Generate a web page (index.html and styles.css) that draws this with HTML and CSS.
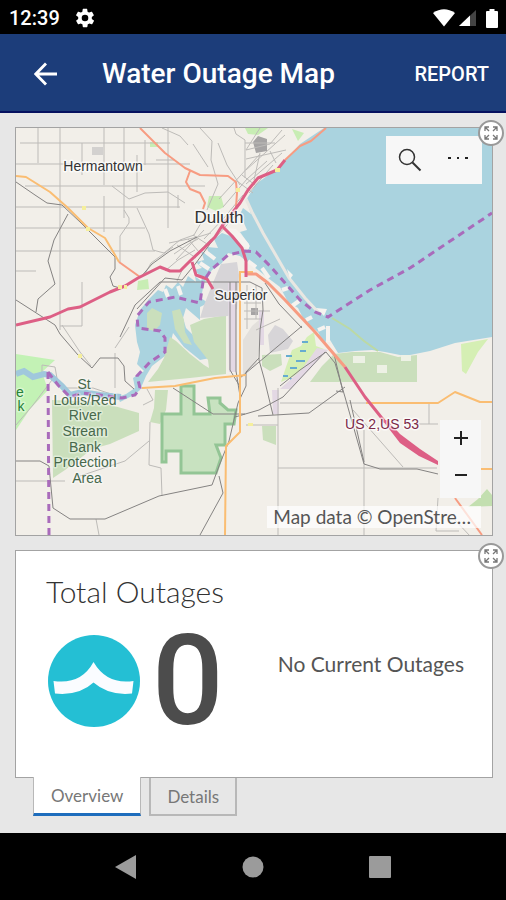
FILE: index.html
```html
<!DOCTYPE html>
<html lang="en">
<head>
<meta charset="utf-8">
<meta name="viewport" content="width=device-width, initial-scale=1">
<title>Water Outage Map</title>
<link rel="stylesheet" href="styles.css">
</head>
<body>
<div class="status">
  <time>12:39</time>
  <svg class="gear" viewBox="0 0 24 24" width="22" height="22" aria-hidden="true"><path fill="#fff" d="M19.4 13a7.500 7.500 0 0 0 0-2l2.100-1.600a.5.5 0 0 0 .1-.6l-2-3.500a.5.5 0 0 0-.6-.2l-2.500 1a7.300 7.300 0 0 0-1.700-1l-.4-2.600A.5.5 0 0 0 14 2h-4a.5.5 0 0 0-.5.400l-.4 2.700a7.700 7.700 0 0 0-1.700 1l-2.500-1a.5.5 0 0 0-.6.200l-2 3.500a.5.5 0 0 0 .1.600L4.600 11a8 8 0 0 0 0 2l-2.100 1.600a.5.5 0 0 0-.1.600l2 3.500c.1.200.4.300.6.200l2.500-1a7.300 7.300 0 0 0 1.700 1l.4 2.700c0 .2.200.400.5.400h4c.2 0 .4-.2.500-.4l.4-2.700a7.700 7.700 0 0 0 1.700-1l2.500 1c.2.100.5 0 .6-.2l2-3.500a.5.5 0 0 0-.1-.6zM12 15.600a3.600 3.600 0 1 1 0-7.200 3.600 3.600 0 0 1 0 7.200z"/></svg>
  <span class="signals">
    <svg viewBox="0 0 22 18" width="22" height="18" aria-hidden="true"><path fill="#fff" d="M0 4Q11-3.500 22 4L11 17.500z"/></svg>
    <svg viewBox="0 0 17 18" width="17" height="18" aria-hidden="true"><path fill="#444" d="M17 1v16H0z"/><path fill="#fff" d="M11 6.600V17H0z"/></svg>
    <svg class="battery" viewBox="0 0 12 19" width="12" height="19" aria-hidden="true"><path fill="#fff" d="M3.500 0h5v2H11q1 0 1 1v15q0 1-1 1H1q-1 0-1-1V3q0-1 1-1h2.500z"/></svg>
  </span>
</div>
<header class="appbar">
  <button class="back" aria-label="Back"><svg viewBox="0 0 24 24" width="24" height="24"><path d="M23 12H2M12 1.500 1.800 12 12 22.500" fill="none" stroke="#fff" stroke-width="2.800"/></svg></button>
  <h1>Water Outage Map</h1>
  <button class="report">REPORT</button>
</header>
<main>
  <section class="panel map" aria-label="Map">
    <svg class="canvas" viewBox="16 128 476 407" preserveAspectRatio="xMidYMid slice">
      <rect x="0" y="100" width="520" height="460" fill="#f2efe9"/>
      <!-- open water and the bays -->
      <path class="water" d="M324 128H492V337L455 343 430 351 405 356 385 352 372 350 355 351 338 353 327 335 325 345 318 332 305 322 298 308 288 302 280 287 268 278 258 270 250 264 240 256 228 253 222 263 212 270 204 283 201 298 208 303 200 307 200 320 186 308 183 318 186 328 198 340 210 358 200 360 184 347 173 333 170 345 165 356 152 366 146 376 140 390 134 395 120 402 118 397 126 394 135 388 133 378 144 371 137 364 140 352 137 342 135 325 140 310 149 299 158 290 163 292 166 285 172 289 178 282 183 287 188 276 196 282 194 270 202 268 196 262 204 260 201 251 209 256 207 247 218 248 214 239 222 233 236 238 246 252 250 246 240 232 247 230 240 214 243 208 251 214 246 200 256 184 278 168 300 144z"/>
      <!-- parks and woodland -->
      <path class="wood" d="M52 400 100 402 139 413 139 431 110 444 92 449 65 470 53 478z"/>
      <path class="wood" d="M147 313 152 308 162 313 160 325 154 331 147 329zM172 311 180 309 184 320 185 332 192 345 184 343 175 329zM164 358 170 337 176 341 190 354 204 365 209 368 208 360 194 342 190 325 204 319 226 315 226 374 190 378 148 382 158 369z"/>
      <path class="wood" d="M334 354 352 352 380 352 398 357 417 355 417 382H310L322 366z"/>
      <path class="wood" d="M155 390 168 390 166 410 160 424 150 422 154 408zM262 355 281 354 282 365 270 371 262 366zM262 426H276V445L263 440z"/>
      <path fill="#c3f2b5" d="M16 354 55 360 42 372 48 390 30 409 16 430z"/>
      <path fill="#c8edb4" d="M209 196H221L224 207 216 211 207 207zM245 128H268L258 135 248 134zM292 129 304 133 298 141zM138 281 148 279 149 289 137 290zM150 142H158V147H150z"/>
      <path fill="#d5efb4" d="M461 344 488 339 478 352 466 374 462 371zM307 337 314 332 316 346 324 349 310 360 297 375 281 382 286 367 292 350 301 346z"/>
      <path fill="#c3dfb0" d="M478 499 487 489 492 495V506L468 507z"/>
      <path fill="none" stroke="#bcd9a4" stroke-width="2" d="M332 318 350 329 364 341 378 351"/>
      <g stroke="#66acd0" stroke-width="2"><path d="M302 342h6M300 351h6M286 356h6M296 361h9M290 368h7M283 376h5M290 379h6"/></g>
      <path fill="#c8e2c0" stroke="#93c595" stroke-width="3" d="M162 462V414H181V386H194V414H210L208 398H220V403L228 410H236L234 424H225V445H216L221 458 216 473H181V451H166V462z"/>
      <!-- built-up areas -->
      <path fill="#d7d5d8" d="M221 264 237 262 239 275 237 309 228 316 200 318 204 305 212 285zM268 335 275 325 283 329 293 341 288 349 270 353z"/>
      <path fill="#e3e0dc" d="M252 326 259 320 262 335 256 365 243 375V340z"/>
      <path fill="#e3d8e4" d="M228 283H236V372H229zM317 348 328 350 291 389 280 389 302 369zM259 310H264V345H259zM272 390H279V414H273z"/>
      <path fill="#a6a4a4" d="M253 142 258 136 267 139V151L256 153zM251 308H258V315H251z"/><path fill="#d3d1cf" d="M92 147H103V155H92z"/>
      <path fill="#edf1e5" d="M353 356H365V363H353zM377 365H387V373H377zM401 355H411V361H401z"/>
      <path class="sand" d="M246 199 252 212 263 233 274 252 289 278 305 298 319 313"/>
      <path fill="#f6f3ef" d="M227 228 236 229 249 244 249 249 242 246zM287 269 293 275 290 279zM316 308 327 309 324 316z"/>
      <path stroke="#f6f3ef" stroke-width="4" d="M248 261 256 267M262 268 269 278M282 290 288 288M292 306 299 301M306 320 312 317M318 330 325 327M328 326V342M191 271 202 279M200 263 209 269M178 286 181 295M165 289 168 297M206 252 215 259"/>
      <!-- minor streets -->
      <g class="minor">
        <path d="M20 143H170M16 164H190M25 186H205M16 207H180M16 228H145M16 251H155M16 271H36M38 128V163M60 128V330M82 143V175M104 128V185M104 196V232M124 128V218M137 155V192M145 140V165M168 128V228M178 195V208M60 326H82V282"/>
        <path d="M112 186 129 199 145 193 168 192M137 208 149 234 153 250 164 253 180 240 194 235 205 216M124 210 129 218 129 223 120 236V262M168 192 185 203M162 128 180 136 188 145M200 128 212 141 211 160 218 184 207 210M193 144 208 167M234 128 236 134 245 140V178M218 143 227 165 240 185M245 143H275M156 160H175"/>
        <path d="M260 128 246 150 270 144 282 130M246 159 286 150M246 170 285 135M260 153 254 180M270 151 276 163M246 184 282 153M249 193 273 165M219 199 241 175 260 154M223 207 247 179 267 161M204 239 224 218 243 195M208 246 235 216M237 181 253 193M242 175 255 185M169 243 198 237 211 233M174 254 190 243 198 239M176 260 204 230M184 267 211 239M165 271 178 260 195 250M177 245 196 258M188 239 199 252M193 235 207 244M177 281 184 266M145 274 151 263 173 247"/>
        <path d="M244 295H262M244 303H261M244 311H270M244 319H262M247 285V329M256 285V319M62 325 80 352 91 366M115 353V388M129 327 115 348M278 388V535M280 403H366M278 468H437M364 430V535M429 403V424M417 424H438M353 410 403 467M150 422 149 465 161 468 162 496M16 481H65M80 476 125 461 149 441M96 519 99 535M16 425 33 405 52 380M42 372V365L55 367 58 384M143 405 153 400 147 389M61 388 93 388 120 397M246 425H278M256 330 280 319M438 498 436 531H459M455 520 470 536"/>
      </g>
      <!-- railways and secondary lines -->
      <g class="rail">
        <path d="M16 182 35 195 47 203 62 205 80 222 115 257V269L110 277 113 286 120 288M68 214 54 240 48 261 55 284 38 299 36 312M16 300 55 325 60 334 78 355 92 368 100 358H118L124 366 125 381 134 389M140 278 152 264 170 251 197 237M120 337 135 305 160 282H250L262 288 263 310 260 330 259 360 264 378 273 415M137 309 165 278 182 280 196 263 218 233M173 388 213 414H245M230 282V370L239 385M236 282V371L240 396M265 283 279 304 302 328M240 378 302 326M280 386 300 370 326 352 335 363 345 397 364 464 380 469 417 469 438 474M235 417 259 410 283 397 325 352M258 416 309 413 345 387M334 354 343 392 336 391M350 400 364 462"/>
        <path d="M16 461H40L49 466 53 508 70 519H105L159 496 212 485 219 466 229 441 238 403 246 386V372L259 358M200 535 223 493 219 476"/>
      </g>
      <!-- state roads and highways -->
      <path class="road yellow" d="M16 176 26 177 50 192 68 208 88 228 105 238 115 255 119 262M142 388 175 386 215 378 246 375M240 271V432L226 446 225 535M241 272H253M366 403H438L455 392 480 402H492M480 469H492"/>
      <path class="road coral" d="M140 128 165 153 185 168 200 175 228 176 236 182 237 193 236 207M190 171 186 182 190 189 200 193 205 203 203 209M119 262 140 277M285 160 300 146 311 141 326 128M455 498 482 535"/>
      <path class="road coral wide" d="M246 274 256 274 268 283 285 300 315 332 345 367"/>
      <path class="road pink" d="M16 325 50 317 68 309 80 307 110 292 125 286 138 278 160 267 170 271H180L190 261 205 247 215 237 222 226 232 236 242 248 246 261V277M222 226 240 203 248 190 258 178 277 170 285 160M345 367 365 397 385 422M192 262 196 275 207 279 213 289"/>
      <path fill="#dd5f85" d="M383 421 387 420 400 434 420 449 438 461V465L419 456 400 443z"/>
      <path fill="#f5ef9c" d="M82 206h4v4h-4zM86 227h4v4h-4zM118 285h4v4h-4zM124 285h3v4h-3zM275 168h5v4h-5zM236 188h4v4h-4zM78 354h4v4h-4zM248 423h5v3h-5z"/>
      <!-- St Louis river -->
      <path fill="none" stroke="#a0c8dc" stroke-width="6" d="M16 374 24 371 33 377 44 374 50 375 62 386 70 395 82 392 100 395 121 397"/>
      <path class="border" d="M48 372 49 535M48 372 58 385 70 397 82 393 100 395 122 398 135 395 140 388 137 376 150 362 165 352 165 338 160 331 138 328 137 316 149 302 175 297 200 303 203 282 211 270 228 255 245 251 256 252 270 266 300 300 315 312 328 317 370 290 410 268 492 213"/>
      <g class="labels">
        <text x="103" y="171">Hermantown</text>
        <text x="219" y="223" class="city">Duluth</text>
        <text x="241" y="300">Superior</text>
        <g class="area"><text x="84" y="389">St</text><text x="85" y="405">Louis/Red</text><text x="85" y="420">River</text><text x="85" y="436">Stream</text><text x="85" y="452">Bank</text><text x="85" y="467">Protection</text><text x="87" y="483">Area</text></g>
        <g class="area edge"><text x="20" y="397">e</text><text x="21" y="411">k</text></g>
        <text x="382" y="429" class="route">US 2,US 53</text>
      </g>
    </svg>
    <div class="tools">
      <button aria-label="Search"><svg viewBox="0 0 24 24" width="24" height="24"><g fill="none" stroke="#333" stroke-width="1.500"><circle cx="9" cy="9" r="7.500"/><path d="m14.500 14.500 8 8" stroke-width="2"/></g></svg></button>
      <button aria-label="More"><svg viewBox="0 0 24 24" width="24" height="24"><path fill="#222" d="M2 9h3v2H2zM11 9h2v2h-2zM19 9h3v2h-3z"/></svg></button>
    </div>
    <div class="zoom">
      <button aria-label="Zoom in"><svg viewBox="0 0 14 14" width="14" height="14"><path d="M0 7h14M7 0v14" stroke="#222" stroke-width="2"/></svg></button>
      <button aria-label="Zoom out"><svg viewBox="0 0 14 14" width="14" height="14"><path d="M1 7h12" stroke="#222" stroke-width="2"/></svg></button>
    </div>
    <div class="credit">Map data © OpenStre…</div>
    <button class="expand" aria-label="Expand map"><svg viewBox="0 0 16 16" width="16" height="16"><path d="M6 6 2 2m0 4V2h4M10 6l4-4m-4 0h4v4M6 10l-4 4m4 0H2v-4M10 10l4 4m0-4v4h-4" fill="none" stroke="#777" stroke-width="1.300"/></svg></button>
  </section>
  <section class="panel total">
    <div class="count">
      <h2>Total Outages</h2>
      <div class="figure">
        <svg viewBox="0 0 92 92" width="92" height="92" aria-hidden="true"><circle cx="46" cy="46" r="46" fill="#24bfd4"/><path fill="#fafcff" d="M5.500 46Q33 50 45.500 27 59 50 85.500 46L84 58.500Q61 61 45.500 47.500 31 61 7 58.500z"/></svg>
        <strong>0</strong>
      </div>
    </div>
    <p>No Current Outages</p>
    <button class="expand" aria-label="Expand total"><svg viewBox="0 0 16 16" width="16" height="16"><path d="M6 6 2 2m0 4V2h4M10 6l4-4m-4 0h4v4M6 10l-4 4m4 0H2v-4M10 10l4 4m0-4v4h-4" fill="none" stroke="#777" stroke-width="1.300"/></svg></button>
  </section>
  <div class="tabs" role="tablist">
    <button role="tab" aria-selected="true">Overview</button>
    <button role="tab" aria-selected="false">Details</button>
  </div>
</main>
<nav class="system">
  <button aria-label="Back"><svg viewBox="0 0 24 24" width="24" height="24"><path fill="#9b9b9b" d="M1 12 22 0v24z"/></svg></button>
  <button aria-label="Home"><svg viewBox="0 0 24 24" width="24" height="24"><circle cx="12" cy="12" r="10.500" fill="#9b9b9b"/></svg></button>
  <button aria-label="Recent apps"><svg viewBox="0 0 24 24" width="24" height="24"><rect x="1" y="1" width="22" height="22" rx="1" fill="#9b9b9b"/></svg></button>
</nav>
</body>
</html>
```
FILE: styles.css
```css
* { box-sizing: border-box; }
body {
  margin: 0;
  min-height: 100vh;
  display: flex;
  flex-direction: column;
  background: #e7e7e7;
  font-family: Lato, "Liberation Sans", sans-serif;
  color: #555;
}
button {
  margin: 0;
  padding: 0;
  border: 0;
  background: none;
  font: inherit;
  color: inherit;
}
svg { display: block; }
h1, h2, p { margin: 0; }

.status {
  display: flex;
  align-items: center;
  height: 34px;
  padding: 2px 8px 0 9px;
  background: #000;
  color: #fff;
  font: 500 20px Roboto, sans-serif;
}
.gear { margin-left: 14px; }
.signals { display: flex; gap: 4px; margin-left: auto; }
.battery { margin-left: 6px; }

.appbar {
  display: flex;
  align-items: center;
  height: 79px;
  padding: 2px 17px 0 34px;
  background: #1c3d7a;
  border-bottom: 2px solid #05115f;
  color: #fff;
  font-family: Roboto, sans-serif;
}
.appbar h1 { margin-left: 44px; font-size: 28px; font-weight: 500; }
.report { margin-left: auto; font-size: 20px; font-weight: 500; }

main {
  flex: 1;
  display: flex;
  flex-direction: column;
  padding: 14px 13px 17px 15px;
}
.panel { position: relative; border: 1px solid #a3a3a3; }
.map { flex: 1; min-height: 300px; margin-bottom: 14px; }
.canvas { position: absolute; width: 100%; height: 100%; }

.water { fill: #aad3df; }
.wood { fill: #cadfbc; }
.sand { fill: none; stroke: #e9e7e2; stroke-width: 3; }
.minor { fill: none; stroke: #bdbbb8; stroke-width: 1; }
.rail { fill: none; stroke: #858382; stroke-width: 1; }
.road { fill: none; stroke-linejoin: round; stroke-width: 2; }
.yellow { stroke: #fabd72; }
.coral { stroke: #f79c82; }
.wide { stroke-width: 3; }
.pink { stroke: #dd5f85; stroke-width: 3; }
.border { fill: none; stroke: #a96bbb; stroke-width: 3; stroke-dasharray: 7 5; }
.labels {
  font: 14px "Liberation Sans", sans-serif;
  text-anchor: middle;
  fill: #333;
  stroke: #fff;
  stroke-width: 3;
  stroke-opacity: .7;
  stroke-linejoin: round;
  paint-order: stroke;
}
.city { font-size: 17px; }
.area { fill: #47684c; stroke-opacity: .4; }
.edge { fill: #268038; }
.route { fill: #7c2948; }

.tools, .zoom { position: absolute; display: flex; background: #f7f7f7; }
.tools { top: 8px; right: 10px; width: 96px; height: 48px; }
.zoom { right: 11px; bottom: 37px; width: 41px; height: 78px; padding-bottom: 5px; flex-direction: column; }
.tools button, .zoom button { flex: 1; display: grid; place-items: center; }
.credit {
  position: absolute;
  right: 11px;
  bottom: 7px;
  padding: 0 10px 0 6px;
  background: rgba(255, 255, 255, .7);
  font-size: 19px;
  line-height: 22px;
}
.expand {
  position: absolute;
  top: -8px;
  right: -12px;
  width: 26px;
  height: 26px;
  display: grid;
  place-items: center;
  border: 2px solid #999;
  border-radius: 50%;
  background: #fff;
}

.total {
  display: flex;
  justify-content: space-between;
  height: 228px;
  padding: 22px 28px 0 30px;
  background: #fff;
}
.total h2 { font-size: 30px; font-weight: 300; line-height: 36px; color: #333; }
.figure { display: flex; align-items: center; gap: 12px; height: 92px; margin-top: 26px; margin-left: 2px; }
.figure strong { font: 500 126px/92px Roboto, sans-serif; color: #4c4c4c; }
.total p { margin-top: 78px; font-size: 21px; line-height: 26px; }

.tabs { display: flex; gap: 8px; padding-left: 18px; }
.tabs button {
  height: 38px;
  padding: 0 16px;
  border: 2px solid #b8b8b8;
  border-top: 0;
  font-size: 17px;
  color: #777;
}
.tabs button[aria-selected="true"] {
  position: relative;
  margin-top: -1px;
  height: 39px;
  padding: 0 17px;
  border-width: 0 1px 3px;
  border-bottom-color: #1e6dbd;
  background: #fff;
}

.system {
  display: flex;
  align-items: center;
  justify-content: center;
  gap: 103px;
  height: 67px;
  background: #000;
}
```
